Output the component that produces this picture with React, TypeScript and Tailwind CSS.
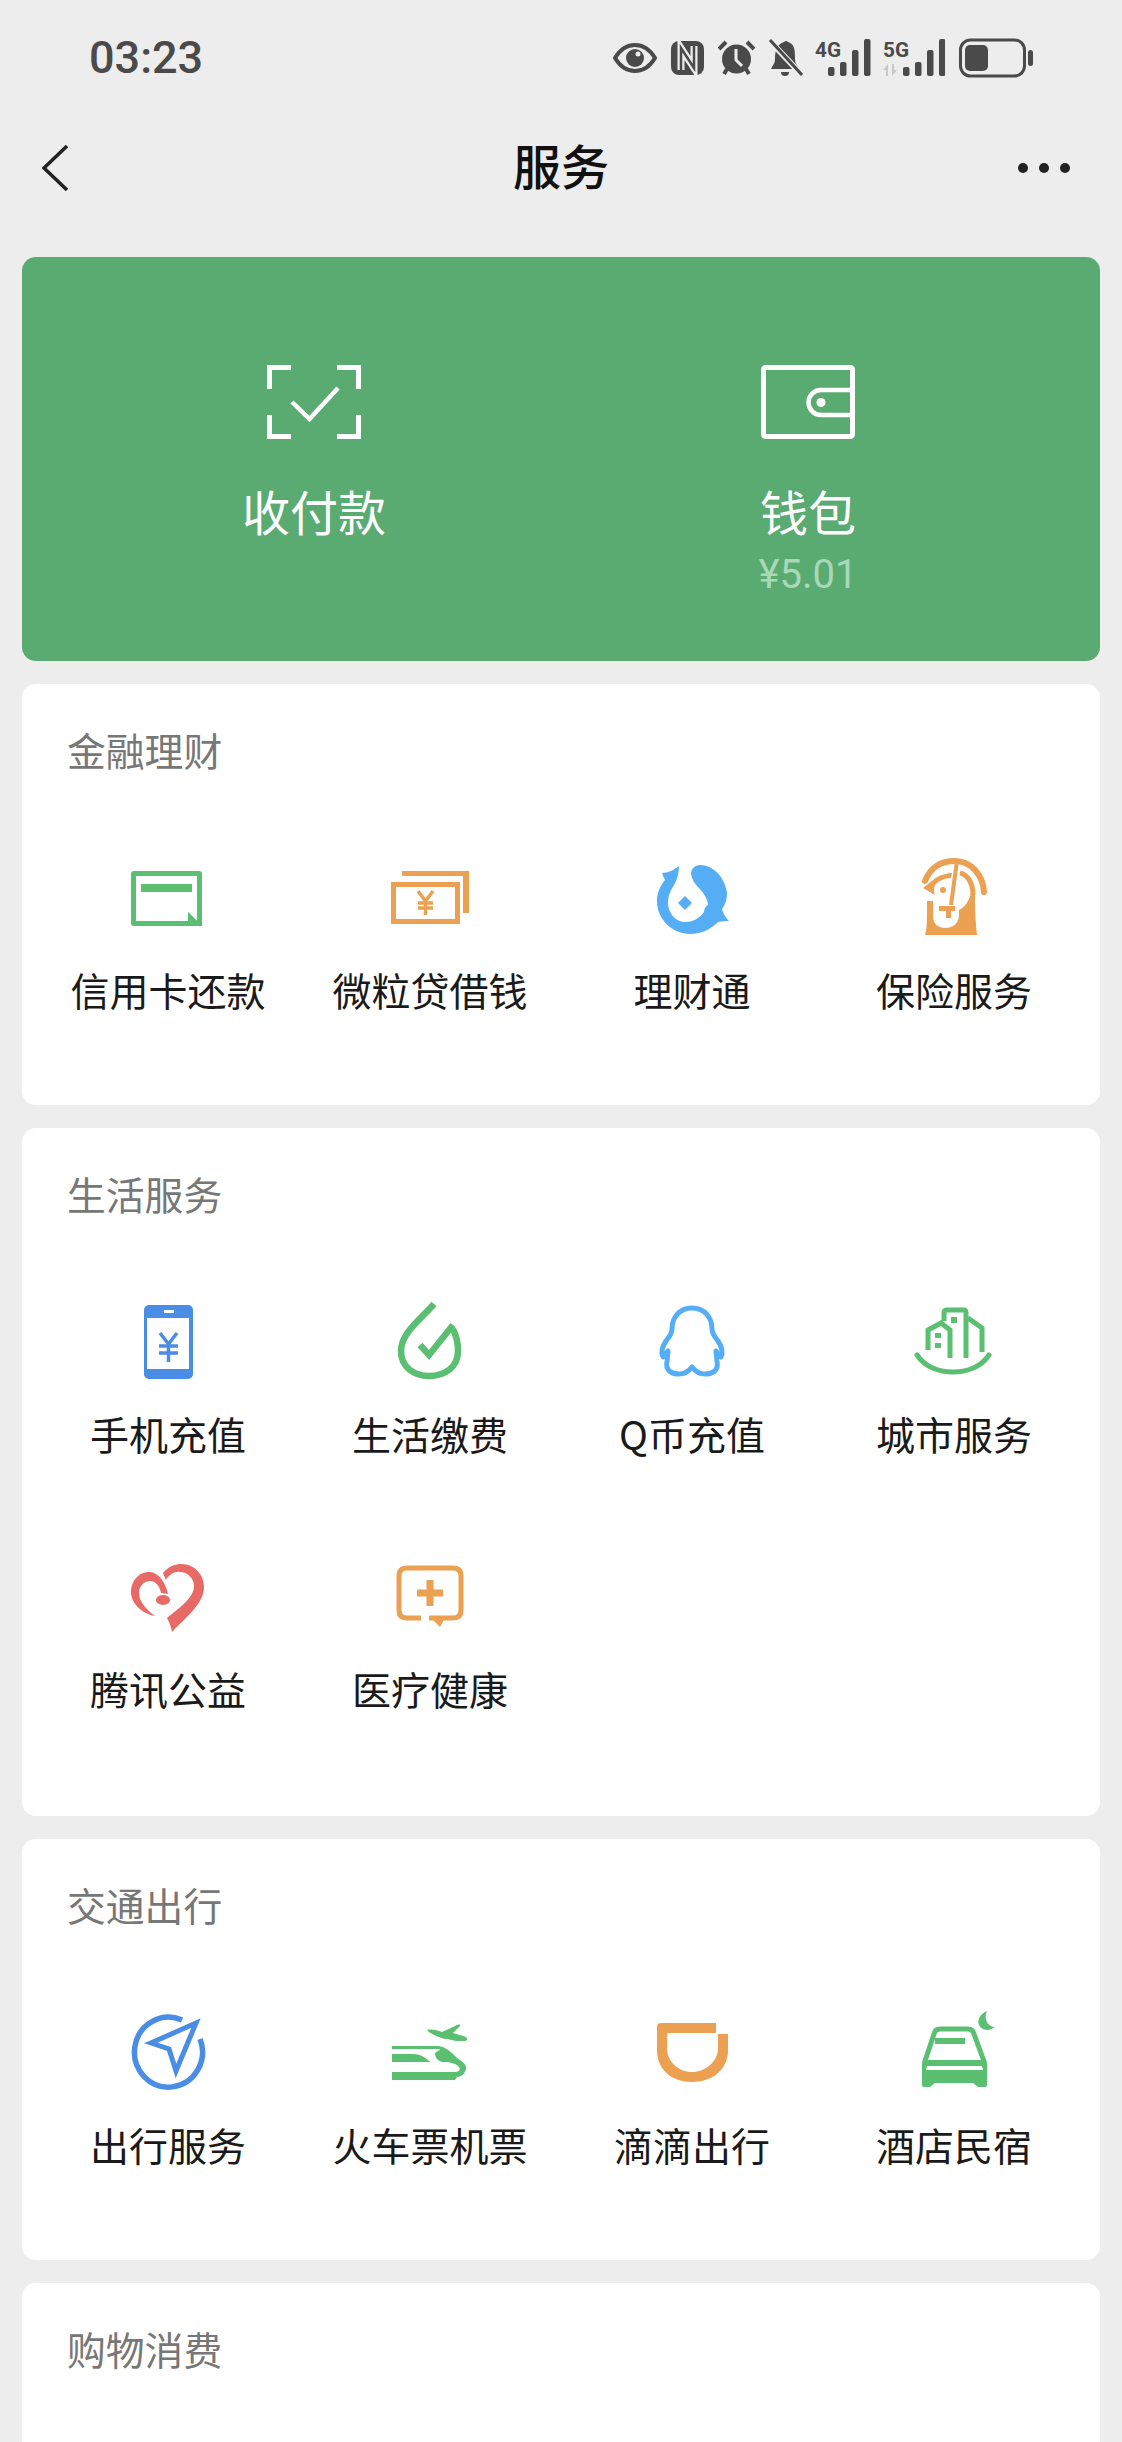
import type { ReactNode } from "react";

const GREEN = "#5bbf72";
const ORANGE = "#eca052";
const SKY = "#55aef5";
const BLUE = "#4a8de6";
const RED = "#e86a66";

function Box({ children }: { children: ReactNode }) {
  return (
    <svg width="90" height="80" viewBox="0 0 90 80" className="overflow-visible">
      {children}
    </svg>
  );
}

const CardIcon = () => (
  <Box>
    <path fillRule="evenodd" d="M11 14h65a3 3 0 0 1 3 3v52H11a3 3 0 0 1-3-3V17a3 3 0 0 1 3-3zM13 19v45h52v-9l9 9V19z" fill={GREEN} />
    <rect x="18" y="27" width="51" height="8" fill={GREEN} />
    <path d="M65 55l14 14H65z" fill={GREEN} />
  </Box>
);

const LoanIcon = () => (
  <Box>
    <path d="M17 14h67v42h-6v-37H17z" fill={ORANGE} />
    <rect x="8.500" y="27.500" width="64" height="37" fill="#fff" stroke={ORANGE} strokeWidth="5" />
    <path d="M33 34l7.500 10 7.500-10M40.500 44v14M33 46h15M33 51h15" fill="none" stroke={ORANGE} strokeWidth="3.500" />
  </Box>
);

const FishIcon = () => (
  <Box>
    <path d="M32 9C27 13 21 16 15 16C16 19 17 21 18 23C13 29 10 36 10 44C10 63 26 77 43 77C55 77 64 72 71 65C75 64 79 64 82 64C78 60 76 56 75 52C79 47 80 41 80 36C78 20 66 8 53 8C48 8 44 12 44 17C45 22 47 26 50 29C56 35 61 42 61 48C58 50 57 52 57 55C52 62 45 65 38 65C28 65 21 55 21 46C21 38 24 33 27 28C30 23 32 16 32 9Z" fill={SKY} />
    <path d="M38 39l7 7-7 7-7-7z" fill={SKY} />
  </Box>
);

const InsureIcon = () => (
  <Box>
    <path d="M16 24C22 9 34 4 46 4C62 4 74 18 75 35" fill="none" stroke={ORANGE} strokeWidth="6" strokeLinecap="round" />
    <path d="M14 31L24 23C30 18 38 16 43 16L42 21C36 21 30 24 27 27C24 30 25 36 26 38Z" fill={ORANGE} />
    <path d="M48 4L42 48" fill="none" stroke={ORANGE} strokeWidth="4" />
    <path d="M51 16C60 18 64 28 64 38" fill="none" stroke={ORANGE} strokeWidth="5" />
    <path d="M66 36C66 48 66 60 68 78H16C18 72 18 66 18 44H24V60C24 67 30 71 36 71C43 71 50 67 50 58V53C56 50 60 44 62 36Z" fill={ORANGE} />
    <path d="M30 49H46V54H42V61H37V54H30Z" fill={ORANGE} />
    <circle cx="34" cy="33" r="3" fill={ORANGE} />
  </Box>
);

const PhoneIcon = () => (
  <Box>
    <path fillRule="evenodd" d="M26 4h39a5 5 0 0 1 5 5v64a5 5 0 0 1-5 5H26a5 5 0 0 1-5-5V9a5 5 0 0 1 5-5zM24 17v51h42V17z" fill={BLUE} />
    <rect x="41" y="9" width="10" height="3" fill="#fff" />
    <path d="M37 32l8.500 11 8.500-11M45.500 43v18M36 45h19M36 52h19" fill="none" stroke={BLUE} strokeWidth="3.500" />
  </Box>
);

const BillIcon = () => (
  <Box>
    <path d="M49 3C36 18 16 32 16 50C16 66 29 75 44 75C60 75 73 66 73 50C73 42 71 34 68 28" fill="none" stroke={GREEN} strokeWidth="6.500" />
    <path d="M35 44L44 54L68 24" fill="none" stroke={GREEN} strokeWidth="6.500" />
  </Box>
);

const QqIcon = () => (
  <Box>
    <path d="M45 7C32 7 25 17 25 28C25 33 22 36 19 40C15 46 14 52 16 56L21 50L20 60C18 70 25 73 32 73C38 73 42 70 45 66C48 70 52 73 58 73C65 73 72 70 70 60L69 50L74 56C76 52 75 46 71 40C68 36 65 33 65 28C65 17 58 7 45 7Z" fill="none" stroke={SKY} strokeWidth="5" strokeLinejoin="round" />
  </Box>
);

const CityIcon = () => (
  <Box>
    <path d="M8 54C16 66 30 71 44 71C58 71 72 66 80 54" fill="none" stroke={GREEN} strokeWidth="5" strokeLinecap="round" />
    <path d="M35 20V12Q35 9 38 9H55Q57 9 57 12V57M19 49V29L32 22L41 29V57M59 17L73 27V51" fill="none" stroke={GREEN} strokeWidth="5" />
    <rect x="42" y="16" width="6" height="6" fill={GREEN} />
    <rect x="26" y="32" width="6" height="5" fill={GREEN} />
    <rect x="26" y="42" width="6" height="5" fill={GREEN} />
  </Box>
);

const HeartIcon = () => (
  <Box>
    <path d="M40 17C46 10 52 8 58 8C72 8 81 19 81 31C81 48 62 62 49 76C48 70 46 66 44 62C56 52 71 42 71 30C71 22 64 16 57 16C51 15 45 20 43 24Z" fill={RED} />
    <path d="M45 38C42 24 34 16 26 16C15 16 8 26 8 36C8 48 20 58 32 60C24 54 16 46 16 37C16 30 21 25 27 25C33 25 37 31 38 37Z" fill={RED} />
    <ellipse cx="40" cy="44" rx="7" ry="5" fill={RED} />
  </Box>
);

const MedicalIcon = () => (
  <Box>
    <path d="M36 62H22Q14 62 14 54V20Q14 12 22 12H68Q76 12 76 20V54Q76 62 68 62H44" fill="none" stroke={ORANGE} strokeWidth="5" />
    <path d="M44 60H61L55 71z" fill={ORANGE} />
    <path d="M32 33.500H41.500V24H48.500V33.500H58V40.500H48.500V50H41.500V40.500H32z" fill={ORANGE} />
  </Box>
);

const CompassIcon = () => (
  <Box>
    <path d="M59 8A34 35 0 1 0 77 27" fill="none" stroke={BLUE} strokeWidth="5.500" />
    <path d="M73 11L28 31L46 37L53 59z" fill="none" stroke={BLUE} strokeWidth="5" />
  </Box>
);

const TrainIcon = () => (
  <Box>
    <path d="M42 18C46 17 52 18 57 20L70 14C73 12 76 12 75 14L68 21L78 24C83 25 83 28 80 29L72 29C66 28 64 27 60 27C54 25 46 23 42 18Z" fill={GREEN} />
    <path d="M7 34H52C60 34 66 40 72 46C78 50 82 53 81 57C80 62 76 65 72 65L70 68H7V60H70C74 60 76 57 74 55C72 52 66 50 58 50C54 50 50 46 50 41C54 38 56 38 54 37H7Z" fill={GREEN} />
    <path d="M7 42H28C36 42 41 46 45 50H7Z" fill={GREEN} />
  </Box>
);

const DidiIcon = () => (
  <Box>
    <path d="M10 15Q10 11 14 11H69V21H20V36C20 50 32 60 45 60C58 60 71 50 71 36V22H81V38C81 58 65 70 45 70C25 70 10 58 10 38Z" fill={ORANGE} />
  </Box>
);

const HotelIcon = () => (
  <Box>
    <path d="M15 52L25 22Q26 17 31 17H59Q64 17 65 22L76 52" fill="none" stroke={GREEN} strokeWidth="5" />
    <rect x="26" y="26" width="30" height="6" fill={GREEN} />
    <path d="M13 52V73Q13 75 15 75H21L26 71H64L69 75H76Q78 75 78 73V52L75 48H16Z" fill={GREEN} />
    <path d="M18 54H73L74 58H17Z" fill="#fff" />
    <path d="M78 -1C71 2 68 8 70 13C72 18 80 20 86 15C80 15 74 8 78 -1Z" fill={GREEN} />
  </Box>
);

type Service = { label: string; icon: ReactNode };

const sections: { title: string; bottom: string; items: Service[] }[] = [
  {
    title: "金融理财",
    bottom: "pb-[88px]",
    items: [
      { label: "信用卡还款", icon: <CardIcon /> },
      { label: "微粒贷借钱", icon: <LoanIcon /> },
      { label: "理财通", icon: <FishIcon /> },
      { label: "保险服务", icon: <InsureIcon /> },
    ],
  },
  {
    title: "生活服务",
    bottom: "pb-[100px]",
    items: [
      { label: "手机充值", icon: <PhoneIcon /> },
      { label: "生活缴费", icon: <BillIcon /> },
      { label: "Q币充值", icon: <QqIcon /> },
      { label: "城市服务", icon: <CityIcon /> },
      { label: "腾讯公益", icon: <HeartIcon /> },
      { label: "医疗健康", icon: <MedicalIcon /> },
    ],
  },
  {
    title: "交通出行",
    bottom: "pb-[88px]",
    items: [
      { label: "出行服务", icon: <CompassIcon /> },
      { label: "火车票机票", icon: <TrainIcon /> },
      { label: "滴滴出行", icon: <DidiIcon /> },
      { label: "酒店民宿", icon: <HotelIcon /> },
    ],
  },
];

function Section({ title, bottom, items }: { title: string; bottom: string; items: Service[] }) {
  return (
    <section className={`rounded-[14px] bg-white px-[15px] pt-[42px] ${bottom}`}>
      <h2 className="h-[46px] pl-[30px] text-[38.800px] leading-[46px] font-normal text-[#777777]">{title}</h2>
      <div className="mt-[85px] grid grid-cols-4 gap-y-[95px]">
        {items.map((item) => (
          <div key={item.label} className="flex flex-col items-center">
            <div className="flex h-[80px] w-[90px] items-center justify-center">{item.icon}</div>
            <span className="mt-[27px] mb-[3px] h-[50px] text-[39px] leading-[50px] whitespace-nowrap text-[#1a1a1a]">{item.label}</span>
          </div>
        ))}
      </div>
    </section>
  );
}

function Signal({ offset }: { offset: number }) {
  const tops = [29, 24, 12, 1];
  return (
    <>
      {tops.map((top, i) => (
        <rect key={top} x={offset + i * 12} y={top} width="6.500" height={38 - top} rx="2" fill="#4a4a4a" />
      ))}
    </>
  );
}

function StatusIcons() {
  const ink = "#4a4a4a";
  return (
    <div className="flex items-center">
      <svg width="44" height="30" viewBox="0 0 44 30">
        <path d="M2 15C8 5 15 2 22 2C29 2 36 5 42 15C36 25 29 28 22 28C15 28 8 25 2 15Z" fill="none" stroke={ink} strokeWidth="4" />
        <circle cx="22" cy="15" r="9" fill={ink} />
        <circle cx="25" cy="11" r="2.500" fill="#ededed" />
      </svg>
      <svg width="33" height="34" viewBox="0 0 33 34" className="ml-[14px]">
        <rect width="33" height="34" rx="8" fill={ink} />
        <path d="M10 29V7L23 27V5" fill="none" stroke="#ededed" strokeWidth="7" />
        <path d="M10 31V7L23 27V3" fill="none" stroke={ink} strokeWidth="2.500" />
      </svg>
      <svg width="37" height="36" viewBox="0 0 37 36" className="ml-[14px]">
        <circle cx="18.500" cy="19" r="14.500" fill={ink} />
        <path d="M18 9V20L24 26" fill="none" stroke="#ededed" strokeWidth="3" />
        <path d="M1 9L8 2M36 9L29 2M6 34L9 29M31 34L28 29" stroke={ink} strokeWidth="4" />
      </svg>
      <svg width="35" height="38" viewBox="0 0 35 38" className="ml-[13px]">
        <path d="M16 3a3 3 0 0 1 4 0C27 5 27 12 27 20C27 25 30 27 31 30H3C4 27 7 25 7 20C7 12 9 5 16 3Z" fill={ink} />
        <path d="M13 33a4 4 0 0 0 8 0z" fill={ink} />
        <path d="M1 1L33 35" stroke="#ededed" strokeWidth="6" />
        <path d="M2 1L34 36" stroke={ink} strokeWidth="3" />
      </svg>
      <svg width="57" height="40" viewBox="0 0 57 40" className="ml-[12px]">
        <text x="0" y="19" fontSize="21" fontWeight="700" fontFamily="Roboto, sans-serif" fill={ink} textLength="26" lengthAdjust="spacingAndGlyphs">
          4G
        </text>
        <Signal offset={13} />
      </svg>
      <svg width="62" height="40" viewBox="0 0 62 40" className="ml-[11px]">
        <text x="0" y="19" fontSize="21" fontWeight="700" fontFamily="Roboto, sans-serif" fill={ink} textLength="26" lengthAdjust="spacingAndGlyphs">
          5G
        </text>
        <path d="M0 32L5 26V38H3V32ZM9 26H11V32H14L9 38Z" fill="#c8c8c8" />
        <Signal offset={20} />
      </svg>
      <svg width="75" height="40" viewBox="0 0 75 40" className="ml-[14px]">
        <rect x="1.500" y="2" width="64" height="36" rx="10" fill="none" stroke={ink} strokeWidth="3" />
        <rect x="6" y="7" width="23" height="26" rx="5" fill={ink} />
        <rect x="69" y="12" width="5" height="16" rx="2.500" fill={ink} />
      </svg>
    </div>
  );
}

export default function App() {
  return (
    <div className="flex h-[2442px] w-[1122px] flex-col overflow-hidden bg-[#ededed] font-['Noto_Sans_CJK_SC','Roboto',sans-serif]">
      <header className="flex h-[116px] items-center justify-between pr-[88px] pl-[89px]">
        <span className="font-['Roboto',sans-serif] text-[45px] font-medium text-[#4a4a4a]">03:23</span>
        <StatusIcons />
      </header>

      <nav className="mb-[37px] grid h-[104px] grid-cols-[1fr_auto_1fr] items-center pr-[52px] pl-[42px]">
        <svg width="26" height="46" viewBox="0 0 26 46">
          <path d="M25 1L2 23L25 45" fill="none" stroke="#222222" strokeWidth="3.500" />
        </svg>
        <h1 className="mb-[8px] ml-[10px] text-[48px] leading-none font-medium text-[#111111]">服务</h1>
        <svg width="52" height="10" viewBox="0 0 52 10" className="justify-self-end">
          <circle cx="5" cy="5" r="5" fill="#222222" />
          <circle cx="26" cy="5" r="5" fill="#222222" />
          <circle cx="47" cy="5" r="5" fill="#222222" />
        </svg>
      </nav>

      <main className="flex flex-1 flex-col gap-[23px] px-[22px]">
        <section className="grid h-[404px] grid-cols-2 rounded-[14px] bg-[#5aab71] px-[45px] pt-[108px]">
          <div className="flex flex-col items-center">
            <svg width="94" height="74" viewBox="0 0 94 74">
              <path d="M24 2.500H2.500V24M70 2.500H91.500V24M24 71.500H2.500V50M70 71.500H91.500V50" fill="none" stroke="#ffffff" strokeWidth="5" />
              <path d="M25 37L42.500 54L71 23" fill="none" stroke="#ffffff" strokeWidth="4.500" />
            </svg>
            <span className="mt-[41px] text-[48px] leading-[60px] text-white">收付款</span>
          </div>
          <div className="flex flex-col items-center">
            <svg width="94" height="74" viewBox="0 0 94 74">
              <rect x="2.500" y="2.500" width="89" height="69" rx="2" fill="none" stroke="#ffffff" strokeWidth="5" />
              <path d="M92 25H60a12 12 0 0 0 0 25H92" fill="none" stroke="#ffffff" strokeWidth="4.500" />
              <circle cx="60" cy="37.500" r="4.500" fill="#ffffff" />
            </svg>
            <span className="mt-[41px] text-[48px] leading-[60px] text-white">钱包</span>
            <span className="mt-[10px] font-['Roboto',sans-serif] text-[40px] leading-[50px] text-[#a8d8b8]">¥5.01</span>
          </div>
        </section>

        {sections.map((section) => (
          <Section key={section.title} {...section} />
        ))}

        <section className="flex-1 rounded-t-[14px] bg-white px-[15px] pt-[42px]">
          <h2 className="h-[46px] pl-[30px] text-[38.800px] leading-[46px] font-normal text-[#777777]">购物消费</h2>
        </section>
      </main>
    </div>
  );
}
